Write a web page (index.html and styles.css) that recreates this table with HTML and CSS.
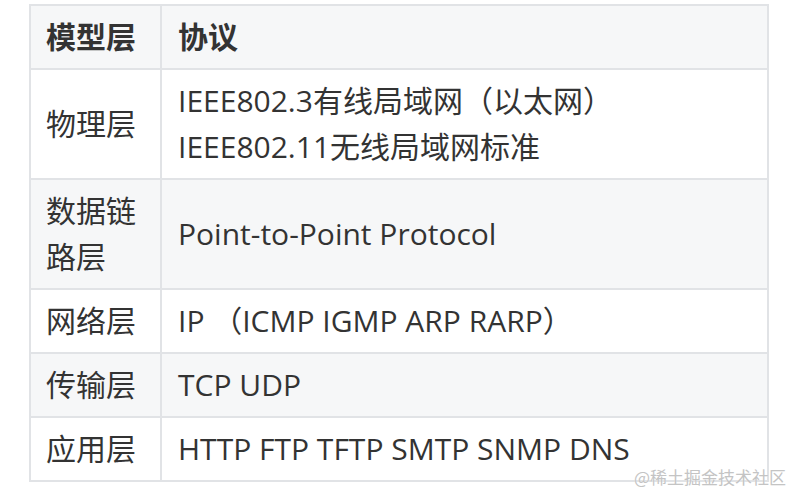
FILE: index.html
```html
<!DOCTYPE html>
<html lang="zh">
<head>
<meta charset="utf-8">
<link rel="stylesheet" href="styles.css">
</head>
<body>
<div class="page">
  <table class="proto">
    <thead>
      <tr><th class="c1">模型层</th><th class="c2">协议</th></tr>
    </thead>
    <tbody>
      <tr><td class="c1">物理层</td><td class="c2">IEEE802.3有线局域网（以太网）<br>IEEE802.11无线局域网标准</td></tr>
      <tr class="alt"><td class="c1">数据链路层</td><td class="c2">Point-to-Point Protocol</td></tr>
      <tr><td class="c1">网络层</td><td class="c2">IP （ICMP IGMP ARP RARP）</td></tr>
      <tr class="alt"><td class="c1">传输层</td><td class="c2">TCP UDP</td></tr>
      <tr><td class="c1">应用层</td><td class="c2">HTTP FTP TFTP SMTP SNMP DNS</td></tr>
    </tbody>
  </table>
  <div class="mark">@稀土掘金技术社区</div>
</div>
</body>
</html>
```

FILE: styles.css
```css
html, body {
  margin: 0;
  padding: 0;
  background: #fff;
}
.page {
  position: relative;
  width: 802px;
  height: 504px;
  padding: 4px 0 0 29px;
  box-sizing: border-box;
  font-family: "Open Sans", "Noto Sans CJK SC", sans-serif;
  color: #333;
}
.proto {
  border-collapse: collapse;
  width: 740px;
  font-size: 30px;
  line-height: 46px;
}
.proto th, .proto td {
  border: 2px solid #e1e3e6;
  padding: 8px 14px 8px 15px;
  text-align: left;
  vertical-align: middle;
}
.proto th {
  background: #f6f7f8;
  font-weight: 700;
}
.proto .c1 {
  width: 100px;
}
.proto .c2 {
  padding-left: 16px;
}
.proto tr.alt td {
  background: #f6f7f8;
}
.mark {
  position: absolute;
  right: 16px;
  bottom: 17px;
  font-family: "Noto Sans CJK SC", sans-serif;
  font-size: 17px;
  line-height: 20px;
  color: #c4c4c4;
  text-shadow: 0 0 1px rgba(255,255,255,0.8);
}
```
